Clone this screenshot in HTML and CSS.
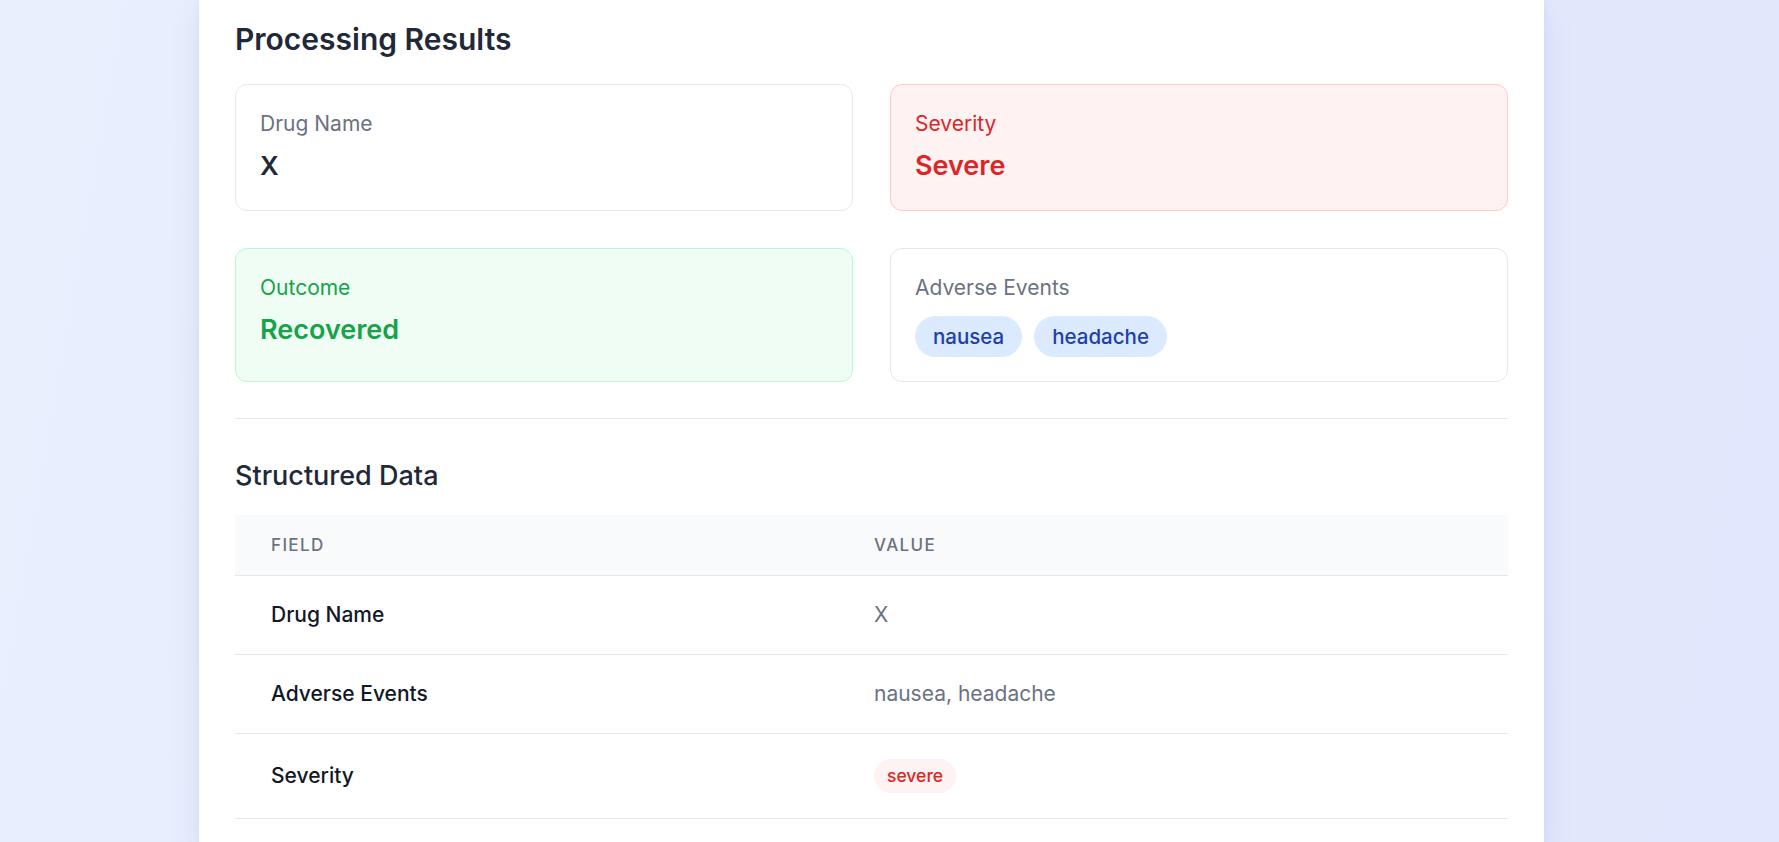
FILE: index.html
```html
<!DOCTYPE html>
<html lang="en">
<head>
<meta charset="utf-8">
<title>Processing Results</title>
<link rel="stylesheet" href="styles.css">
</head>
<body>
<div class="page">
  <main class="panel">
    <h2 class="title">Processing Results</h2>
    <div class="cards">
      <div class="card">
        <div class="card-label">Drug Name</div>
        <div class="card-value">X</div>
      </div>
      <div class="card card-red">
        <div class="card-label">Severity</div>
        <div class="card-value">Severe</div>
      </div>
      <div class="card card-green">
        <div class="card-label">Outcome</div>
        <div class="card-value">Recovered</div>
      </div>
      <div class="card">
        <div class="card-label">Adverse Events</div>
        <div class="pills">
          <span class="pill">nausea</span>
          <span class="pill">headache</span>
        </div>
      </div>
    </div>
    <hr class="divider">
    <h3 class="subtitle">Structured Data</h3>
    <table class="data">
      <colgroup><col class="col-field"><col></colgroup>
      <thead>
        <tr><th>Field</th><th>Value</th></tr>
      </thead>
      <tbody>
        <tr><td class="field">Drug Name</td><td class="value">X</td></tr>
        <tr><td class="field">Adverse Events</td><td class="value">nausea, headache</td></tr>
        <tr><td class="field">Severity</td><td class="value"><span class="badge">severe</span></td></tr>
      </tbody>
    </table>
  </main>
</div>
</body>
</html>
```

FILE: styles.css
```css
* { box-sizing: border-box; }
html, body { margin: 0; padding: 0; }
body {
  font-family: Inter, "Noto Sans", "Liberation Sans", sans-serif;
  background: linear-gradient(100deg, #e9effd 0%, #e5ebfd 50%, #e1e7fc 100%);
  min-height: 842px;
  overflow: hidden;
}
.page { display: flex; }
.panel {
  margin-left: 199px;
  width: 1345px;
  min-height: 842px;
  background: #ffffff;
  padding: 19px 36px 0 36px;
  box-shadow: 0 10px 30px rgba(60, 80, 160, 0.10), 0 2px 6px rgba(60, 80, 160, 0.06);
}
.title {
  margin: 0 0 25px 0;
  font-size: 30px;
  line-height: 40px;
  font-weight: 600;
  color: #1f2937;
}
.cards {
  display: grid;
  grid-template-columns: 1fr 1fr;
  gap: 37px;
}
.card {
  border: 1px solid #e5e7eb;
  border-radius: 12px;
  background: #ffffff;
  padding: 24px 24px 24px 24px;
}
.card-label {
  font-size: 21px;
  line-height: 30px;
  color: #6b7280;
}
.card-value {
  margin-top: 6px;
  font-size: 26px;
  line-height: 41px;
  font-weight: 600;
  color: #1f2937;
}
.card-red { background: #fef2f2; border-color: #fecaca; }
.card-red .card-label, .card-red .card-value { color: #dc2626; }
.card-red .card-value { font-weight: 600; font-size: 27px; }
.card-green { background: #f0fdf4; border-color: #bbf7d0; }
.card-green .card-label, .card-green .card-value { color: #16a34a; }
.card-green .card-value { font-weight: 600; font-size: 27px; }
.pills {
  display: flex;
  gap: 12px;
  margin-top: 13px;
}
.pill {
  display: inline-flex;
  align-items: center;
  height: 41px;
  padding: 0 18px;
  border-radius: 999px;
  background: #dbeafe;
  color: #1e40af;
  font-size: 20.5px;
  font-weight: 500;
}
.divider {
  margin: 36px 0 0 0;
  border: 0;
  border-top: 1px solid #e5e7eb;
  height: 0;
}
.subtitle {
  margin: 39px 0 21px 0;
  font-size: 27px;
  line-height: 36px;
  font-weight: 500;
  color: #1f2937;
}
.data {
  width: 100%;
  border-collapse: collapse;
  table-layout: fixed;
}
.col-field { width: 603px; }
.data th {
  background: #f9fafb;
  text-align: left;
  font-size: 17px;
  line-height: 21px;
  font-weight: 500;
  letter-spacing: 0.08em;
  text-transform: uppercase;
  color: #6b7280;
  padding: 20px 36px 19px 36px;
  border-bottom: 1px solid #e5e7eb;
}
.data td {
  padding: 25px 36px;
  font-size: 21px;
  line-height: 28px;
  border-bottom: 1px solid #e5e7eb;
}
.data td.field { font-weight: 500; color: #111827; }
.data td.value { color: #6b7280; }
.badge {
  display: inline-block;
  padding: 4px 13px;
  border-radius: 999px;
  background: #fef2f2;
  color: #dc2626;
  font-size: 17.5px;
  line-height: 26px;
  font-weight: 500;
  vertical-align: middle;
}
```
